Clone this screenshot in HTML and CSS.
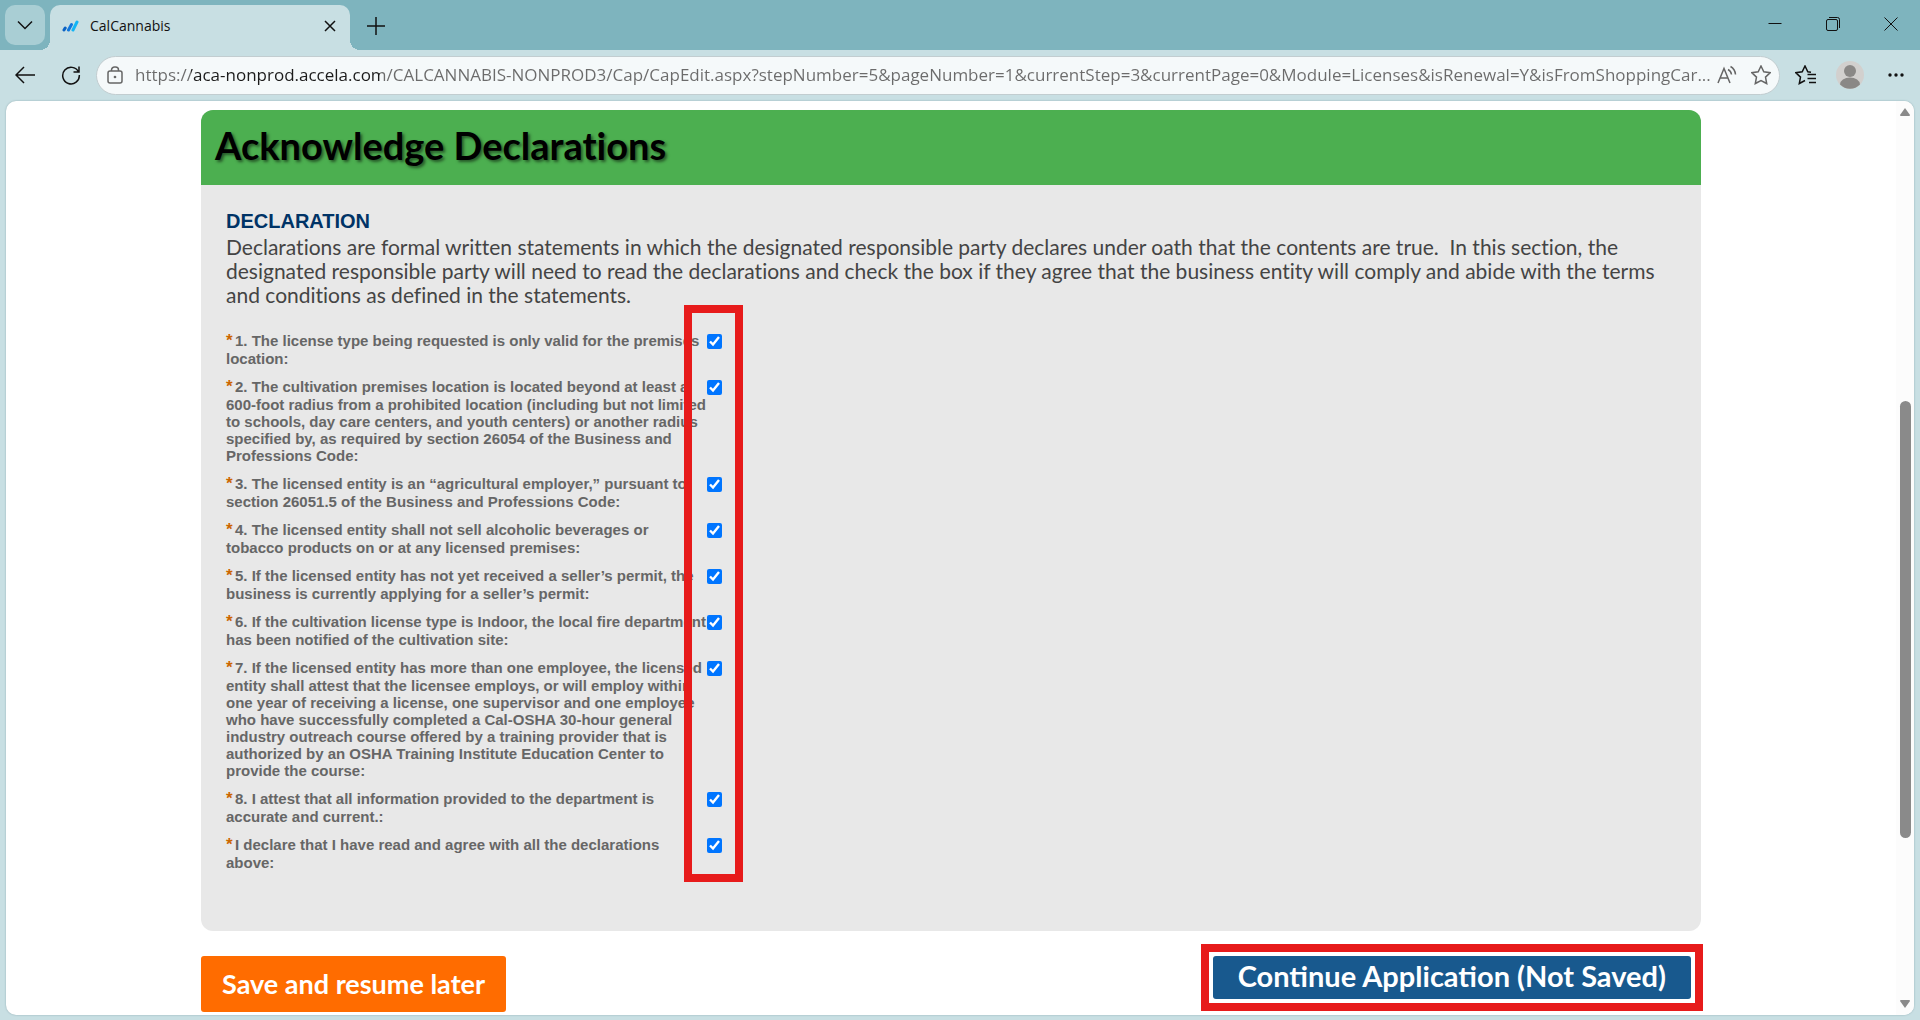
FILE: index.html
```
<!DOCTYPE html>
<html lang="en">
<head>
  <meta charset="UTF-8">
  <meta name="viewport" content="width=device-width, initial-scale=1.0">
  <title>CalCannabis</title>
  <link rel="stylesheet" href="styles.css">
</head>
<body>
  <header class="tabstrip">
    <button class="tab-menu" aria-label="Tab actions">
      <svg width="16" height="10" viewBox="0 0 16 10"><path d="M1 1.5l7 7 7-7"/></svg>
    </button>
    <div class="tab">
      <svg class="favicon" width="17" height="12" viewBox="0 0 17 12">
        <path d="M2 10l1.200-2" stroke="#0b63c4"/>
        <path d="M6.500 10l3-5.500" stroke="#1177dd"/>
        <path d="M11 10l4-8" stroke="#12b5f5"/>
      </svg>
      <span class="tab-title">CalCannabis</span>
      <button class="tab-close" aria-label="Close tab">
        <svg width="12" height="12" viewBox="0 0 12 12"><path d="M1 1l10 10M11 1L1 11"/></svg>
      </button>
    </div>
    <button class="new-tab" aria-label="New tab">
      <svg width="20" height="20" viewBox="0 0 20 20"><path d="M10 1v18M1 10h18"/></svg>
    </button>
    <div class="window-buttons">
      <button aria-label="Minimize"><svg width="14" height="14" viewBox="0 0 14 14"><path d="M.5 6.500h13"/></svg></button>
      <button aria-label="Restore"><svg width="14" height="14" viewBox="0 0 14 14"><rect x=".5" y="2.500" width="11" height="11" rx="1.500"/><path d="M3 .5h8.500a2 2 0 0 1 2 2V11"/></svg></button>
      <button aria-label="Close"><svg width="14" height="14" viewBox="0 0 14 14"><path d="M.5.5l13 13M13.500.5l-13 13"/></svg></button>
    </div>
  </header>

  <nav class="toolbar">
    <button class="nav-button" aria-label="Back">
      <svg width="20" height="18" viewBox="0 0 20 18"><path d="M9 1L1 9l8 8M1 9h19"/></svg>
    </button>
    <button class="nav-button" aria-label="Refresh">
      <svg width="20" height="20" viewBox="0 0 20 20"><path d="M17.500 7A8.300 8.300 0 1 0 18.300 10M18 1.500V7h-5.500"/></svg>
    </button>
    <div class="address">
      <svg class="lock" width="16" height="18" viewBox="0 0 16 18"><rect x="1" y="5" width="14" height="12" rx="2"/><path d="M4.500 5V4a3 3 0 0 1 3-3h1a3 3 0 0 1 3 3v1"/><circle cx="8" cy="11" r=".6"/></svg>
      <input class="url" type="text" aria-label="Address" value="https://aca-nonprod.accela.com/CALCANNABIS-NONPROD3/Cap/CapEdit.aspx?stepNumber=5&amp;pageNumber=1&amp;currentStep=3&amp;currentPage=0&amp;Module=Licenses&amp;isRenewal=Y&amp;isFromShoppingCar...">
      <button class="address-icon" aria-label="Read aloud">
        <svg width="20" height="20" viewBox="0 0 20 20"><path d="M1 18L7 3.500 13 18M3 13h8M11 4.500q3 1.500 3.500 5M13.500 1.500q4.500 2.500 5 8"/></svg>
      </button>
      <button class="address-icon" aria-label="Add to favorites">
        <svg width="20" height="20" viewBox="0 0 20 20"><path d="M10 1l2.800 5.800 6.300.9-4.600 4.400 1.200 6.400L10 15.500l-5.700 3 1.200-6.400L.9 7.700l6.300-.9z"/></svg>
      </button>
    </div>
    <button class="nav-button" aria-label="Favorites">
      <svg width="21" height="20" viewBox="0 0 21 20"><path d="M10 15.500l-5.700 3 1.200-6.400L.9 7.700l6.300-.9L10 1l2.800 5.800 3.200.5M12.500 9.500H21M12.500 13.500H21M14 17.500h7"/></svg>
    </button>
    <button class="avatar" aria-label="Profile">
      <svg width="28" height="28" viewBox="0 0 28 28"><circle cx="14" cy="14" r="14" fill="#d2d0ce"/><circle cx="14" cy="10" r="6" fill="#8a8886"/><path d="M4 23.500a10 7 0 0 1 20 0A14 14 0 0 1 4 23.500z" fill="#8a8886"/></svg>
    </button>
    <button class="nav-button" aria-label="Settings and more">
      <svg class="dots" width="16" height="4" viewBox="0 0 16 4"><circle cx="2" cy="2" r="1.700"/><circle cx="8" cy="2" r="1.700"/><circle cx="14" cy="2" r="1.700"/></svg>
    </button>
  </nav>

  <div class="viewport">
    <main class="page">
      <section class="panel">
        <h1>Acknowledge Declarations</h1>
        <div class="panel-body">
          <h2>DECLARATION</h2>
          <p class="intro">Declarations are formal written statements in which the designated responsible party declares under oath that the contents are true.&nbsp; In this section, the<br>designated responsible party will need to read the declarations and check the box if they agree that the business entity will comply and abide with the terms<br>and conditions as defined in the statements.</p>

          <div class="declarations">
            <div class="item">
              <label for="d1"><span class="req">*</span>1. The license type being requested is only valid for the premises<br>location:</label>
              <input type="checkbox" id="d1" checked>
            </div>
            <div class="item">
              <label for="d2"><span class="req">*</span>2. The cultivation premises location is located beyond at least a<br>600-foot radius from a prohibited location (including but not limited<br>to schools, day care centers, and youth centers) or another radius<br>specified by, as required by section 26054 of the Business and<br>Professions Code:</label>
              <input type="checkbox" id="d2" checked>
            </div>
            <div class="item">
              <label for="d3"><span class="req">*</span>3. The licensed entity is an “agricultural employer,” pursuant to<br>section 26051.5 of the Business and Professions Code:</label>
              <input type="checkbox" id="d3" checked>
            </div>
            <div class="item">
              <label for="d4"><span class="req">*</span>4. The licensed entity shall not sell alcoholic beverages or<br>tobacco products on or at any licensed premises:</label>
              <input type="checkbox" id="d4" checked>
            </div>
            <div class="item">
              <label for="d5"><span class="req">*</span>5. If the licensed entity has not yet received a seller’s permit, the<br>business is currently applying for a seller’s permit:</label>
              <input type="checkbox" id="d5" checked>
            </div>
            <div class="item">
              <label for="d6"><span class="req">*</span>6. If the cultivation license type is Indoor, the local fire department<br>has been notified of the cultivation site:</label>
              <input type="checkbox" id="d6" checked>
            </div>
            <div class="item">
              <label for="d7"><span class="req">*</span>7. If the licensed entity has more than one employee, the licensed<br>entity shall attest that the licensee employs, or will employ within<br>one year of receiving a license, one supervisor and one employee<br>who have successfully completed a Cal-OSHA 30-hour general<br>industry outreach course offered by a training provider that is<br>authorized by an OSHA Training Institute Education Center to<br>provide the course:</label>
              <input type="checkbox" id="d7" checked>
            </div>
            <div class="item">
              <label for="d8"><span class="req">*</span>8. I attest that all information provided to the department is<br>accurate and current.:</label>
              <input type="checkbox" id="d8" checked>
            </div>
            <div class="item">
              <label for="d9"><span class="req">*</span>I declare that I have read and agree with all the declarations<br>above:</label>
              <input type="checkbox" id="d9" checked>
            </div>
            <div class="check-frame"></div>
          </div>
        </div>
      </section>

      <div class="actions">
        <button class="save">Save and resume later</button>
        <div class="continue-wrap">
          <button class="continue">Continue Application (Not Saved)</button>
        </div>
      </div>
    </main>
    <div class="scrollbar">
      <svg width="10" height="8" viewBox="0 0 10 8"><path d="M5 0l5 7q0 1-1 1H1Q0 8 0 7z"/></svg>
      <div class="track"><div class="thumb"></div></div>
      <svg width="10" height="8" viewBox="0 0 10 8"><path d="M5 8l5-7q0-1-1-1H1Q0 0 0 1z"/></svg>
    </div>
  </div>
</body>
</html>
```
FILE: styles.css
```
* {
  box-sizing: border-box;
}
body {
  margin: 0;
  height: 100vh;
  display: flex;
  flex-direction: column;
  overflow: hidden;
  background: #c8dfe3;
  font-family: "Open Sans", sans-serif;
}
button {
  border: none;
  background: none;
  padding: 0;
  cursor: pointer;
}
svg {
  display: block;
  fill: none;
  stroke: #111;
  stroke-width: 1.5;
}

/* browser tabs */
.tabstrip {
  display: flex;
  height: 50px;
  padding: 5px 0 0 5px;
  background: #7eb4be;
}
.tab-menu {
  display: flex;
  align-items: center;
  justify-content: center;
  width: 40px;
  height: 40px;
  border-radius: 10px;
  background: #a9ced4;
}
.tab {
  position: relative;
  display: flex;
  align-items: center;
  width: 300px;
  margin-left: 5px;
  padding: 0 14px 4px 12px;
  border-radius: 10px 10px 0 0;
  background: #c8dfe3;
}
.tab::before,
.tab::after {
  content: "";
  position: absolute;
  bottom: 0;
  width: 10px;
  height: 10px;
}
.tab::before {
  left: -10px;
  background: radial-gradient(circle at 0 0, transparent 10px, #c8dfe3 10px);
}
.tab::after {
  right: -10px;
  background: radial-gradient(circle at 100% 0, transparent 10px, #c8dfe3 10px);
}
.favicon {
  stroke-width: 3;
  stroke-linecap: round;
}
.tab-title {
  flex: 1;
  margin-left: 11px;
  font-size: 14px;
  color: #111;
}
.new-tab {
  width: 20px;
  margin: 0 0 4px 16px;
}
.window-buttons {
  display: flex;
  margin-left: auto;
}
.window-buttons button {
  display: flex;
  align-items: center;
  justify-content: center;
  width: 58px;
  height: 38px;
}
.window-buttons svg {
  stroke-width: 1;
}

/* address row */
.toolbar {
  display: flex;
  align-items: center;
  height: 50px;
  padding: 0 16px 0 15px;
}
.nav-button {
  display: flex;
  align-items: center;
}
.nav-button + .nav-button {
  margin-left: 26px;
}
.address {
  flex: 1;
  display: flex;
  align-items: center;
  height: 39px;
  margin: 0 15px 0 15px;
  padding: 0 8px 0 10px;
  border: 1px solid #c2cdd0;
  border-radius: 20px;
  background: #f5f9fa;
}
.address svg {
  stroke: #666;
}
.url {
  flex: 1;
  min-width: 0;
  margin: 0 0 2px 12px;
  padding: 0;
  border: none;
  outline: none;
  font-family: "Open Sans", sans-serif;
  font-size: 17px;
  color: transparent;
  background: linear-gradient(90deg, #6b6b6b 56px, #1b1b1b 56px, #1b1b1b 245px, #6b6b6b 245px);
  background-clip: text;
  -webkit-background-clip: text;
}
.address-icon + .address-icon {
  margin-left: 14px;
}
.avatar {
  margin: 0 24px 0 20px;
}
.avatar svg {
  stroke: none;
}
.dots {
  fill: #111;
  stroke: none;
}

/* web page */
.viewport {
  flex: 1;
  display: flex;
  min-height: 0;
  margin: 1px 6px 5px;
  border-radius: 10px;
  background: #fff;
  box-shadow: 0 0 2px #8aa8ae;
  overflow: hidden;
}
.page {
  flex: 1;
  padding: 9px 195px 0;
  font-family: Lato, sans-serif;
  font-variant-ligatures: none;
}
.panel {
  border-radius: 12px;
  background: #e8e8e8;
  overflow: hidden;
}
h1 {
  margin: 0;
  padding: 12px 14px 16px;
  background: #4caf50;
  font-size: 38px;
  line-height: 47px;
  color: #000;
  text-shadow: 2px 2px 3px rgba(0, 0, 0, 0.5);
}
.panel-body {
  padding: 24px 24px 49px 25px;
}
h2 {
  margin: 0;
  font-family: "Liberation Sans", Arial, sans-serif;
  font-size: 20px;
  line-height: 24px;
  color: #003366;
}
.intro {
  margin: 2px 0 25px;
  font-size: 21px;
  line-height: 24px;
  color: #444;
  white-space: nowrap;
}
.declarations {
  position: relative;
}
.item {
  display: flex;
  align-items: flex-start;
  margin-bottom: 11px;
}
.item label {
  width: 481px;
  font-family: "Liberation Sans", Arial, sans-serif;
  font-size: 15px;
  font-weight: bold;
  line-height: 17px;
  color: #666;
  white-space: nowrap;
}
.item input {
  width: 15px;
  height: 15px;
  margin: 2px 0 0;
  accent-color: #0075ff;
}
.req {
  display: inline-block;
  width: 9px;
  font-size: 17px;
  line-height: 18px;
  color: #cc6600;
}
.check-frame {
  position: absolute;
  top: -27px;
  bottom: -11px;
  left: 458px;
  width: 59px;
  border: 8px solid #e71b1b;
  pointer-events: none;
}
.actions {
  display: flex;
  justify-content: space-between;
  align-items: flex-start;
  margin-right: -2px;
  padding-top: 13px;
}
.actions button {
  border-radius: 3px;
  font-family: Lato, sans-serif;
  font-weight: bold;
  color: #fff;
  white-space: nowrap;
}
.save {
  margin-top: 12px;
  padding: 0 21px;
  font-size: 27px;
  line-height: 56px;
  background: #ff6c00;
}
.continue-wrap {
  padding: 4px;
  border: 8px solid #e71b1b;
}
.continue {
  display: block;
  padding: 0 25px 4px;
  font-size: 29px;
  line-height: 39px;
  background: #18598e;
}

.scrollbar {
  display: flex;
  flex-direction: column;
  align-items: center;
  width: 18px;
  padding: 7px 0;
  background: #fcfcfc;
}
.scrollbar svg {
  fill: #8a8a8a;
  stroke: none;
}
.track {
  flex: 1;
  display: flex;
  flex-direction: column;
}
.track::before,
.track::after {
  content: "";
  flex: 285;
}
.track::after {
  flex: 162;
}
.thumb {
  flex: 438;
  width: 11px;
  border-radius: 6px;
  background: #8a8a8a;
}
```
